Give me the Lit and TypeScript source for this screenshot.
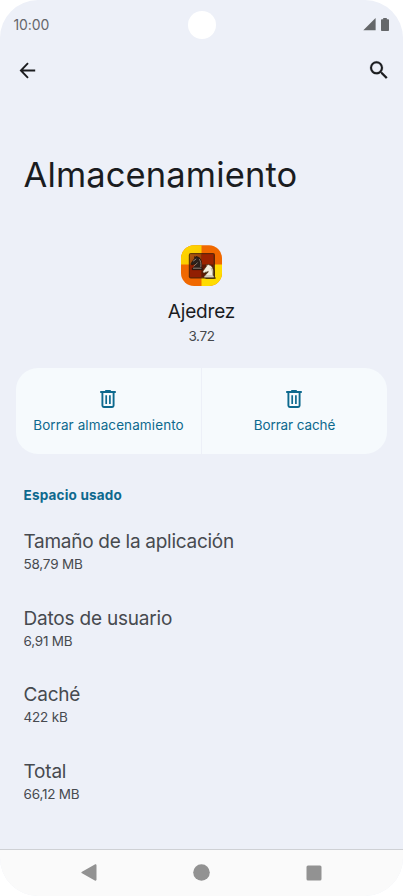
import { LitElement, html, css, svg } from "lit";
import { customElement } from "lit/decorators.js";

interface UsageRow {
  key: string;
  label: string;
  value: string;
}

const rows: UsageRow[] = [
  { key: "app", label: "Tamaño de la aplicación", value: "58,79 MB" },
  { key: "data", label: "Datos de usuario", value: "6,91 MB" },
  { key: "cache", label: "Caché", value: "422 kB" },
  { key: "total", label: "Total", value: "66,12 MB" },
];

const knight = svg`
  <path d="M1.8 14.4h10.6v-1.6l-1-.6c.5-3.4.4-6.3-.7-8.4C9.900 2 8.500 1.100 6.900.9L6.300 0 5.300 1.300 4.300.6v2C3 3.800 2.400 5.400 1 7.100c-.5.7-.5 1.600.1 2.100.7.5 1.600.2 2.200-.5 1.100 0 2-.3 3-.9C6 9.600 3.300 10.600 3 12.200l-1.200.7z"/>`;

@customElement("trash-icon")
export class TrashIcon extends LitElement {
  static styles = css`
    :host { display: block; width: 16px; height: 18px; margin-right: 1px; }
    svg { display: block; }
  `;
  render() {
    return html`<svg width="16" height="18" viewBox="0 0 16 18" fill="none" stroke="#0d698e">
      <path d="M5.2 .7h5.6" stroke-width="1.4" />
      <path d="M.2 2h15.6" stroke-width="1.8" />
      <path d="M2.4 2.500v13.100c0 .9.5 1.400 1.400 1.400h8.400c.9 0 1.400-.5 1.400-1.400V2.500" stroke-width="1.9" />
      <path d="M6.2 5.300v8.600M9.900 5.300v8.600" stroke-width="1.7" />
    </svg>`;
  }
}

@customElement("app-root")
export class AppRoot extends LitElement {
  static styles = css`
    :host {
      display: block;
      height: 896px;
      background: #fff;
      font-family: "Inter", "Noto Sans", sans-serif;
      color: #1a1c1f;
    }
    svg { display: block; }
    .screen {
      box-sizing: border-box;
      height: 896px;
      border-radius: 38px;
      overflow: hidden;
      background: #edf0f8;
      display: flex;
      flex-direction: column;
    }
    .status {
      height: 39px;
      flex: none;
      display: grid;
      grid-template-columns: 1fr 28px 1fr;
      align-items: start;
      padding: 11px 13.5px 0 13.5px;
      box-sizing: border-box;
    }
    .time {
      font-size: 14px;
      line-height: 18px;
      margin-top: 5px;
      letter-spacing: -.1px;
      color: #65676b;
    }
    .camera { width: 28px; height: 28px; border-radius: 50%; background: #fff; }
    .signals { display: flex; justify-content: flex-end; gap: 5px; margin: 7px .5px 0 0; }
    .toolbar {
      height: 24px;
      flex: none;
      margin-top: 19px;
      padding: 0 12px 0 16px;
      display: flex;
      align-items: center;
      justify-content: space-between;
    }
    h1 {
      margin: 73px 0 0 23.5px;
      font-size: 34.5px;
      line-height: 40px;
      font-weight: 400;
      letter-spacing: .13px;
    }
    .app { margin-top: 50px; display: flex; flex-direction: column; align-items: center; }
    .name { margin-top: 13px; font-size: 19px; line-height: 24px; letter-spacing: -.18px; }
    .version { margin-top: 3px; font-size: 13.5px; line-height: 18px; letter-spacing: -.4px; color: #45484d; }
    .actions {
      margin: 23px 16px 0;
      height: 85.5px;
      flex: none;
      border-radius: 22px;
      overflow: hidden;
      display: grid;
      grid-template-columns: 185px 185px;
      gap: 1px;
    }
    .action {
      background: #f6fafd;
      color: #0d698e;
      display: flex;
      flex-direction: column;
      align-items: center;
      padding-top: 22px;
      gap: 8px;
      font-size: 13.5px;
      line-height: 18px;
      white-space: nowrap;
    }
    .storage { letter-spacing: .1px; }
    .clear { letter-spacing: -.1px; }
    h2 {
      margin: 32.5px 0 0 23.5px;
      font-size: 13.5px;
      line-height: 18px;
      font-weight: 700;
      letter-spacing: .2px;
      color: #0d698e;
    }
    .usage { margin: 26px 0 0 23.5px; display: flex; flex-direction: column; gap: 33.7px; flex: 1; }
    .label { font-size: 19px; line-height: 24px; color: #474a4f; letter-spacing: -.2px; }
    .value { margin-top: 1px; font-size: 13.5px; line-height: 18px; color: #474a4f; letter-spacing: -.2px; }
    .app-size { letter-spacing: -.28px; }
    .nav {
      flex: none;
      height: 47px;
      box-sizing: border-box;
      border-top: 1px solid #cfd1d5;
      background: #fafafa;
      display: flex;
      align-items: center;
      justify-content: space-between;
      padding: 0 81px 1px 81px;
      fill: #929292;
    }
  `;

  render() {
    return html`<div class="screen">
      <div class="status">
        <span class="time">10:00</span>
        <span class="camera"></span>
        <div class="signals">
          <svg width="13" height="13" viewBox="0 0 13 13" fill="#65676a"><path d="M0.300 12.200L12.600 0v12.200z" /></svg>
          <svg width="8" height="13" viewBox="0 0 8 13" fill="#65676a"><path d="M2.200 0h3.600v1.200H7.200c.5 0 .8.3.8.8v10.200c0 .5-.3.8-.8.8H.8c-.5 0-.8-.3-.8-.8V2c0-.5.3-.8.8-.8h1.400z" /></svg>
        </div>
      </div>
      <div class="toolbar">
        <svg width="23" height="24" viewBox="0 0 23 24" fill="none" stroke="#1c1d20" stroke-width="1.9">
          <path d="M19.200 12.500H5M12 5.100L4.900 12.500l7.100 7.300" />
        </svg>
        <svg width="24" height="24" viewBox="0 -.3 24 24" fill="#1c1d20" stroke="#1c1d20" stroke-width=".2">
          <path d="M15.500 14h-.79l-.28-.27A6.471 6.471 0 0 0 16 9.500 6.500 6.500 0 1 0 9.500 16c1.610 0 3.090-.59 4.230-1.570l.27.28v.79l5 4.990L20.490 19l-4.990-5zm-6 0C7.010 14 5 11.990 5 9.500S7.010 5 9.500 5 14 7.010 14 9.500 11.990 14 9.500 14z" />
        </svg>
      </div>
      <h1>Almacenamiento</h1>
      <div class="app">
        <svg width="42" height="42" viewBox="0 0 42 42">
          <defs>
            <clipPath id="tile"><rect x="0" y=".2" width="41" height="40.800" rx="13" /></clipPath>
            <linearGradient id="yellow" x2="1" y2="1"><stop stop-color="#ffd900" /><stop offset="1" stop-color="#f9c400" /></linearGradient>
            <linearGradient id="dark" x2="1" y2="1"><stop stop-color="#b05a10" /><stop offset="1" stop-color="#8f3608" /></linearGradient>
          </defs>
          <g clip-path="url(#tile)">
            <rect width="42" height="42" fill="#f06800" />
            <rect width="20.500" height="19.500" fill="url(#yellow)" />
            <rect x="20.500" y="19.500" width="21.500" height="22.500" fill="#ffdc00" />
          </g>
          <rect x="7.800" y="8" width="26.200" height="25.500" rx="2" fill="#3c1407" opacity=".8" />
          <rect x="9" y="9.200" width="11.500" height="10.500" fill="url(#dark)" />
          <rect x="20.500" y="9.200" width="12" height="10.500" fill="#9c2200" />
          <rect x="9" y="19.700" width="11.500" height="12.500" fill="#921f02" />
          <rect x="20.500" y="19.700" width="12" height="12.500" fill="#5f1704" />
          <g transform="translate(9.500 11) scale(.95)" fill="#2b201b" stroke="#120b08" stroke-width=".5">${knight}</g>
          <path d="M12.200 16.100l3-2.200M18.300 14.200c1.500 2 1.900 4.800 1.500 7.800M12 23.200h8.400M12.900 21.300c1-1.800 3-2.400 3.600-3.700" stroke="#a8978a" stroke-width=".8" fill="none" />
          <g transform="translate(22.800 20.200) scale(.95)" fill="#3a2408" opacity=".8">${knight}</g>
          <g transform="translate(21.300 19) scale(.95)" fill="#f4efe0" stroke="#4a3018" stroke-width=".7">${knight}</g>
          <path d="M24 31h8.400M30 22.900c1.300 2 1.700 4.200 1.500 6.800" stroke="#9f937b" stroke-width=".7" fill="none" />
        </svg>
        <div class="name">Ajedrez</div>
        <div class="version">3.72</div>
      </div>
      <div class="actions">
        <div class="action storage"><trash-icon></trash-icon><span>Borrar almacenamiento</span></div>
        <div class="action clear"><trash-icon></trash-icon><span>Borrar caché</span></div>
      </div>
      <h2>Espacio usado</h2>
      <div class="usage">
        ${rows.map((r) => html`<div>
          <div class="label ${r.key === "app" ? "app-size" : ""}">${r.label}</div>
          <div class="value">${r.value}</div>
        </div>`)}
      </div>
      <div class="nav">
        <svg width="16" height="17" viewBox="0 0 16 17"><path d="M1 7.700L13.800.4c1-.5 1.700 0 1.700 1v14.200c0 1-.7 1.500-1.700 1L1 9.300c-.9-.5-.9-1.100 0-1.600z" /></svg>
        <svg width="17" height="17" viewBox="0 0 17 17"><circle cx="8.500" cy="8.500" r="8.300" /></svg>
        <svg width="16" height="16" viewBox="0 0 16 16"><rect x=".5" y=".5" width="15" height="15" rx="1.5" /></svg>
      </div>
    </div>`;
  }
}
